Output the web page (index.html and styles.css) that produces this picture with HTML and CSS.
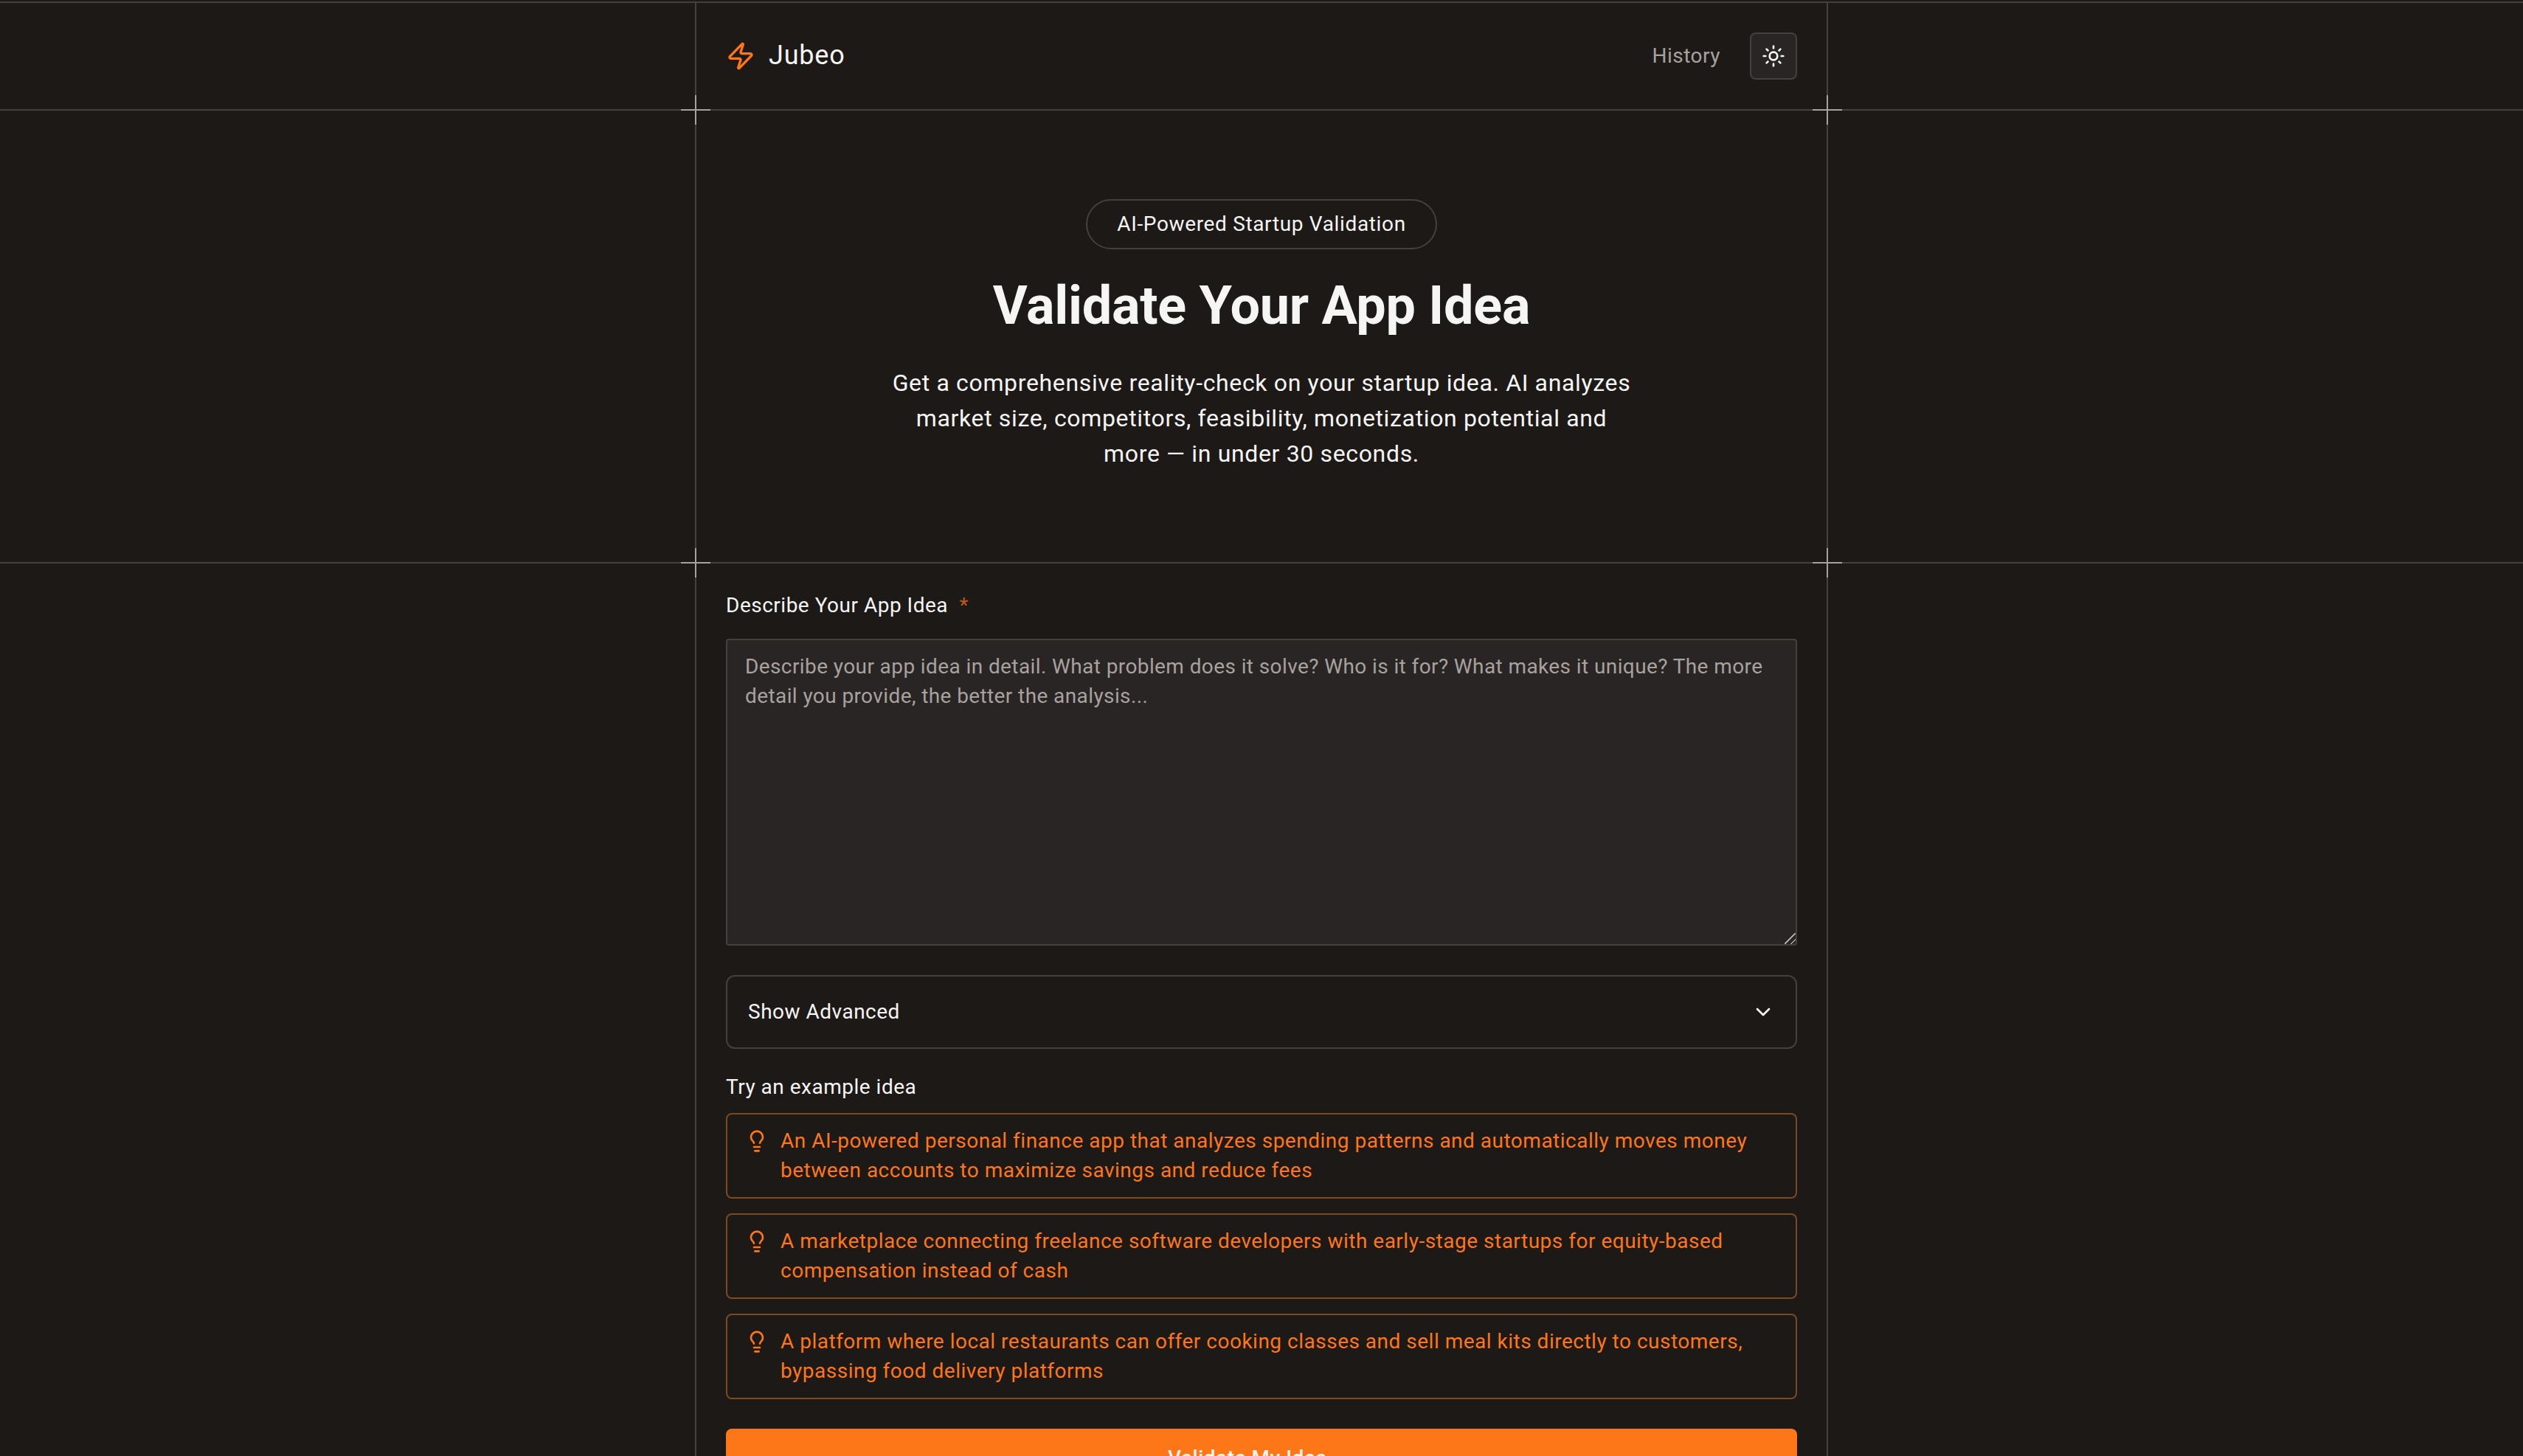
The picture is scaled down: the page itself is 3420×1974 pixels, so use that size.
FILE: index.html
```html
<!DOCTYPE html>
<html lang="en">
<head>
  <meta charset="UTF-8" />
  <meta name="viewport" content="width=device-width, initial-scale=1.0"/>
  <title>Jubeo - Validate Your App Idea</title>
  <link rel="stylesheet" href="styles.css">
</head>
<body>

  <header class="band band-top">
    <div class="column nav">
      <a class="logo" href="#">
        <svg class="logo-icon" viewBox="0 0 24 24"><path d="M4 14a1 1 0 0 1-.78-1.63l9.9-10.2a.5.5 0 0 1 .86.46l-1.92 6.02A1 1 0 0 0 13 10h7a1 1 0 0 1 .78 1.63l-9.9 10.2a.5.5 0 0 1-.86-.46l1.92-6.02A1 1 0 0 0 11 14z"/></svg>
        <span>Jubeo</span>
      </a>
      <div class="nav-right">
        <a class="nav-link" href="#">History</a>
        <button class="theme-btn" type="button" aria-label="Toggle theme">
          <svg viewBox="0 0 24 24"><circle cx="12" cy="12" r="4"/><path d="M12 2v2M12 20v2M4.93 4.93l1.41 1.41M17.66 17.66l1.41 1.41M2 12h2M20 12h2M6.34 17.66l-1.41 1.41M19.07 4.93l-1.41 1.41"/></svg>
        </button>
      </div>
      <span class="cross cross-left"></span>
      <span class="cross cross-right"></span>
    </div>
  </header>

  <section class="band">
    <div class="column hero">
      <div class="badge">AI-Powered Startup Validation</div>
      <h1>Validate Your App Idea</h1>
      <p>Get a comprehensive reality-check on your startup idea. AI analyzes market size, competitors, feasibility, monetization potential and more — in under 30 seconds.</p>
      <span class="cross cross-left"></span>
      <span class="cross cross-right"></span>
    </div>
  </section>

  <main class="column form">
    <label class="field-label" for="idea">Describe Your App Idea <span class="required">*</span></label>
    <textarea id="idea" class="idea-input" placeholder="Describe your app idea in detail. What problem does it solve? Who is it for? What makes it unique? The more detail you provide, the better the analysis..."></textarea>

    <button class="advanced" type="button">
      <span>Show Advanced</span>
      <svg viewBox="0 0 24 24"><path d="m6 9 6 6 6-6"/></svg>
    </button>

    <div class="examples-title">Try an example idea</div>
    <div class="examples">
      <button class="example" type="button">
        <svg viewBox="0 0 24 24"><path d="M15 14c.2-1 .7-1.7 1.5-2.5 1-.9 1.5-2.2 1.5-3.5A6 6 0 0 0 6 8c0 1 .2 2.2 1.5 3.5.7.7 1.3 1.5 1.5 2.5M9 18h6M10 22h4"/></svg>
        <span>An AI-powered personal finance app that analyzes spending patterns and automatically moves money between accounts to maximize savings and reduce fees</span>
      </button>
      <button class="example" type="button">
        <svg viewBox="0 0 24 24"><path d="M15 14c.2-1 .7-1.7 1.5-2.5 1-.9 1.5-2.2 1.5-3.5A6 6 0 0 0 6 8c0 1 .2 2.2 1.5 3.5.7.7 1.3 1.5 1.5 2.5M9 18h6M10 22h4"/></svg>
        <span>A marketplace connecting freelance software developers with early-stage startups for equity-based compensation instead of cash</span>
      </button>
      <button class="example" type="button">
        <svg viewBox="0 0 24 24"><path d="M15 14c.2-1 .7-1.7 1.5-2.5 1-.9 1.5-2.2 1.5-3.5A6 6 0 0 0 6 8c0 1 .2 2.2 1.5 3.5.7.7 1.3 1.5 1.5 2.5M9 18h6M10 22h4"/></svg>
        <span>A platform where local restaurants can offer cooking classes and sell meal kits directly to customers, bypassing food delivery platforms</span>
      </button>
    </div>

    <button class="submit" type="button">Validate My Idea</button>
  </main>

</body>
</html>
```

FILE: styles.css
```css
* {
  box-sizing: border-box;
}

html,
body {
  height: 100vh;
  overflow: hidden;
}

body {
  margin: 0;
  padding-top: 2px;
  background-color: #1c1917;
  color: #f5f5f4;
  font-family: Roboto, "Liberation Sans", sans-serif;
  font-size: 28px;
  line-height: 40px;
  letter-spacing: 0.5px;
}

button,
textarea {
  font: inherit;
  letter-spacing: inherit;
}

svg {
  fill: none;
  stroke: currentColor;
  stroke-width: 2;
  stroke-linecap: round;
  stroke-linejoin: round;
}

.band {
  border-bottom: 2px solid #44403c;
}

.band-top {
  border-top: 2px solid #44403c;
}

.column {
  position: relative;
  width: 1536px;
  margin: 0 auto;
  border-left: 2px solid #44403c;
  border-right: 2px solid #44403c;
}

.cross {
  position: absolute;
  z-index: 1;
  bottom: -21px;
  width: 40px;
  height: 40px;
  background:
    linear-gradient(#a8a29e, #a8a29e) center / 40px 2px no-repeat,
    linear-gradient(#a8a29e, #a8a29e) center / 2px 40px no-repeat;
}

.cross-left {
  left: -21px;
}

.cross-right {
  right: -21px;
}

/* nav */
.nav {
  display: flex;
  align-items: center;
  justify-content: space-between;
  height: 144px;
  padding: 0 40px;
}

.logo {
  display: flex;
  align-items: center;
  gap: 18px;
  color: #f5f5f4;
  font-size: 36px;
  letter-spacing: 0.8px;
  text-decoration: none;
}

.logo span {
  margin-top: -2px;
}

.logo-icon {
  width: 40px;
  height: 40px;
  color: #fd7617;
}

.nav-right {
  display: flex;
  align-items: center;
  gap: 40px;
}

.nav-link {
  color: #a8a29e;
  text-decoration: none;
}

.theme-btn {
  display: flex;
  align-items: center;
  justify-content: center;
  width: 64px;
  height: 64px;
  padding: 0;
  background-color: #292524;
  border: 2px solid #44403c;
  border-radius: 8px;
  color: #f5f5f4;
}

.theme-btn svg {
  width: 32px;
  height: 32px;
}

/* hero */
.hero {
  display: flex;
  flex-direction: column;
  align-items: center;
  height: 612px;
  padding-top: 120px;
  text-align: center;
}

.badge {
  height: 68px;
  padding: 12px 40px;
  border: 2px solid #44403c;
  border-radius: 34px;
  letter-spacing: 0.65px;
}

.hero h1 {
  margin: 37px 0 0;
  font-size: 72px;
  font-weight: 700;
  line-height: 80px;
  letter-spacing: -0.3px;
}

.hero p {
  width: 1010px;
  margin: 40px 0 0;
  font-size: 32px;
  line-height: 48px;
  letter-spacing: 0.65px;
}

/* form */
.form {
  padding: 37px 40px 0;
}

.field-label {
  display: block;
  margin-bottom: 25px;
}

.required {
  margin-left: 8px;
  color: #c2590f;
}

.idea-input {
  display: block;
  width: 100%;
  height: 416px;
  padding: 16px 24px;
  background-color: #292524;
  border: 2px solid #44403c;
  border-radius: 4px;
  color: #f5f5f4;
  outline: none;
  letter-spacing: 0.4px;
}

.idea-input::placeholder {
  color: #a8a29e;
}

.idea-input::-webkit-resizer {
  background: linear-gradient(135deg, transparent 46%, #a8a29e 46% 54%, transparent 54% 74%, #a8a29e 74% 82%, transparent 82%);
}

.advanced {
  display: flex;
  align-items: center;
  justify-content: space-between;
  width: 100%;
  height: 100px;
  margin-top: 40px;
  padding: 0 28px;
  background: none;
  border: 2px solid #44403c;
  border-radius: 12px;
  color: #f5f5f4;
  text-align: left;
}

.advanced svg {
  width: 32px;
  height: 32px;
}

.examples-title {
  margin-top: 32px;
}

.examples {
  display: flex;
  flex-direction: column;
  gap: 20px;
  margin-top: 15px;
}

.example {
  display: flex;
  gap: 16px;
  width: 100%;
  padding: 16px 28px 16px 24px;
  background: none;
  border: 2px solid #7c4a22;
  border-radius: 8px;
  color: #fd7617;
  text-align: left;
}

.example svg {
  flex: none;
  width: 32px;
  height: 32px;
  margin-top: 4px;
}

.submit {
  display: block;
  width: 100%;
  height: 80px;
  margin-top: 40px;
  padding: 0 38px 0 0;
  background-color: #fd7617;
  border: none;
  border-radius: 8px;
  color: #f5f5f4;
  font-weight: 500;
}
```
